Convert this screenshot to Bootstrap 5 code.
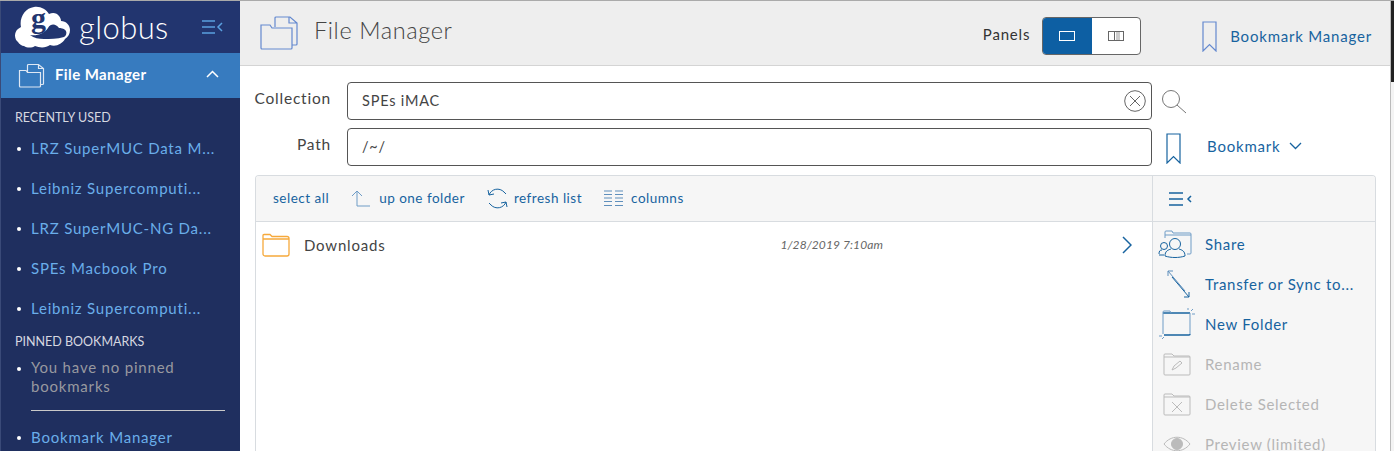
<!DOCTYPE html>
<html lang="en">

<head>
  <meta charset="UTF-8" />
  <title>File Manager</title>
  <link href="https://cdn.jsdelivr.net/npm/bootstrap@5.3.2/dist/css/bootstrap.min.css" rel="stylesheet" />
  <style>
    html, body { height: 451px; overflow: hidden; }
    body { font-family: Lato, "Liberation Sans", sans-serif; font-size: 15px; color: #333; letter-spacing: .8px; border-top: 1px solid #aaa; }
    .app-shell { height: 450px; }

    /* sidebar */
    .side-nav { width: 240px; flex: none; background: #1f2f5f; color: #ddd; border-left: 1px solid #3a4a78; overflow: hidden; }
    .side-brand { height: 52px; background: #22356f; padding: 0 16px 0 14px; }
    .side-brand-name { font-size: 31px; font-weight: 300; color: #fff; letter-spacing: .4px; margin-left: 8px; line-height: 1; }
    .side-active { height: 45px; background: #377bbf; color: #fff; padding: 0 21px 0 17px; font-size: 15px; font-weight: 700; letter-spacing: .4px; }
    .side-active-name { margin-left: 10px; margin-bottom: 3px; }
    .side-chevron { margin-left: auto; margin-bottom: 3px; }
    .side-head { font-size: 12.5px; color: #d6d8e0; padding-left: 14px; letter-spacing: 0; line-height: 16px; }
    .side-list { list-style: none; margin: 0; padding: 0 0 0 14px; font-size: 15px; }
    .side-list li { position: relative; padding-left: 16px; line-height: 20px; margin-bottom: 20px; white-space: nowrap; }
    .side-list li:last-child { margin-bottom: 16px; }
    .side-list li::before { content: ""; position: absolute; left: 2px; top: 9px; width: 4px; height: 4px; border-radius: 50%; background: #fff; }
    .side-list a { color: #6aaeea; text-decoration: none; }
    .side-list li.side-note { margin-bottom: 0; white-space: normal; }
    .side-muted { color: #98999f; line-height: 19px; }
    .side-rule { height: 1px; width: 194px; background: #c9c9c9; margin: 14px 0 16px 30px; }

    /* header */
    .top-bar { height: 65px; background: #eee; border-bottom: 1px solid #d4d4d4; padding: 0 18px 0 20px; }
    .top-title { font-size: 23.5px; font-weight: 300; color: #444; margin-left: 16px; margin-bottom: 5px; letter-spacing: .6px; }
    .top-right { margin-left: auto; margin-top: 6px; }
    .panel-label { margin-top: -3px; }
    .panel-btns { width: 99px; height: 38px; margin-left: 12px; margin-right: 61px; border: 1px solid #666; border-radius: 4px; overflow: hidden; background: #fff; }
    .panel-on { width: 50px; background: #0d5fa3; margin: -1px 0 -1px -1px; }
    .panel-off { flex: 1; }
    .link-blue { color: #17639f; text-decoration: none; }
    .top-link { margin-left: 13px; }

    /* form */
    .path-form { padding: 16px 0 0 0; height: 109px; }
    .form-row-line { height: 46px; }
    .field-label { width: 91px; margin-right: 16px; padding-top: 5px; text-align: right; color: #444; font-size: 15.5px; flex: none; }
    .field-box { width: 805px; height: 38px; flex: none; border: 1px solid #555; border-radius: 4px; padding: 0 5px 0 14px; color: #444; font-size: 14.5px; }
    .search-icon { margin: 7px 0 0 9px; }
    .mark-icon { margin: 5px 0 0 14px; }
    .mark-link { margin: 7px 0 0 26px; }

    /* file panel */
    .file-panel { width: 1121px; margin-left: 15px; border: 1px solid #d8dce0; border-bottom: 0; border-radius: 4px 4px 0 0; height: 278px; overflow: hidden; }
    .file-main { width: 896px; flex: none; }
    .file-tools { height: 46px; background: #f6f6f6; border-bottom: 1px solid #d8dce0; padding-left: 17px; font-size: 13.5px; letter-spacing: .5px; gap: 22px; }
    .tool-gap { margin-right: 8px; }
    .tool-gap-sm { margin-right: 6px; }
    .file-row { height: 48px; padding: 0 20px 2px 6px; color: #444; font-size: 15px; }
    .file-name { margin-left: 14px; }
    .file-date { font-style: italic; font-size: 12px; color: #666; margin-left: auto; margin-right: 239px; letter-spacing: .1px; }
    .action-col { flex: 1; background: #f6f6f6; border-left: 1px solid #d8dce0; }
    .action-top { height: 46px; border-bottom: 1px solid #d8dce0; padding-left: 16px; margin-bottom: 2px; }
    .action-row { height: 40px; padding-left: 5px; font-size: 15px; letter-spacing: .7px; white-space: nowrap; }
    .action-icon { width: 39px; flex: none; margin-right: 8px; }
    .action-off { color: #b5b5b5; }
    .icon-in-8 { margin-left: 8px; }
    .icon-in-5 { margin-left: 5px; }

    /* window scrollbar */
    .win-scroll { width: 4px; flex: none; background: #f4f4f4; border-left: 1px solid #bbb; }
    .win-thumb { height: 81px; background: #222; }
    svg { display: block; flex: none; }
  </style>
</head>

<body>
  <div class="app-shell d-flex">
    <!-- Sidebar -->
    <nav class="side-nav">
      <div class="side-brand d-flex align-items-center">
        <svg width="56" height="42" viewBox="0 0 56 42">
          <path fill="#fff" d="M3 36c-4-3-4-10 0-13 1-1 2-1 3-2C4 12 10 2 19 1c6-1 12 2 15 7 4-2 8-1 10 2 1 1 2 3 2 5 5 0 9 4 9 9 0 4-2 7-5 9-3 5-9 8-15 6-4 3-10 3-15 1-3 2-8 2-11 0-2 0-5-2-6-4z" />
          <path fill="#22356f" d="M15 29c7 1 14-1 18-7 3-5 8-4 11 0 1 0 5 0 7 3 1 2 0 5-2 6-7 2-14 2-20 2-5 0-10-1-14-4z" />
          <text x="16" y="22" fill="#22356f" font-family="Liberation Serif, serif" font-size="30" font-weight="700" letter-spacing="0">g</text>
        </svg>
        <span class="side-brand-name">globus</span>
        <svg class="ms-auto" width="22" height="16" viewBox="0 0 22 16" fill="none" stroke="#5aa0e0" stroke-width="1.5">
          <path d="M0 2h13M0 8h13M0 14h13M20 4l-4 4 4 4" />
        </svg>
      </div>
      <div class="side-active d-flex align-items-center">
        <svg width="27" height="25" viewBox="0 0 27 25" fill="none" stroke="#dfe8f4" stroke-width="1.2">
          <path d="M1.500 7.500h6.500l1.500 2h13v13.500a1 1 0 0 1-1 1h-19a1 1 0 0 1-1-1zM9.500 9V2.500a1 1 0 0 1 1-1h10l5 4v15a1 1 0 0 1-1 1h-1.500M20.500 1.500v4h5" />
        </svg>
        <span class="side-active-name">File Manager</span>
        <svg class="side-chevron" width="13" height="8" viewBox="0 0 13 8" fill="none" stroke="#fff" stroke-width="1.500">
          <path d="M1 7l5.500-5.500L12 7" />
        </svg>
      </div>
      <div class="side-head mt-2 mb-2 pb-1 pt-1">RECENTLY USED</div>
      <ul class="side-list">
        <li><a href="#">LRZ SuperMUC Data M...</a></li>
        <li><a href="#">Leibniz Supercomputi...</a></li>
        <li><a href="#">LRZ SuperMUC-NG Da...</a></li>
        <li><a href="#">SPEs Macbook Pro</a></li>
        <li><a href="#">Leibniz Supercomputi...</a></li>
      </ul>
      <div class="side-head mb-2">PINNED BOOKMARKS</div>
      <ul class="side-list">
        <li class="side-note d-flex align-items-center"><span class="side-muted">You have no pinned bookmarks</span></li>
      </ul>
      <div class="side-rule"></div>
      <ul class="side-list">
        <li><a href="#">Bookmark Manager</a></li>
      </ul>
    </nav>

    <main class="flex-grow-1">
      <!-- Header -->
      <header class="top-bar d-flex align-items-center">
        <svg width="38" height="35" viewBox="0 0 38 35" fill="none" stroke="#6489cf" stroke-width="1.200">
          <path d="M1 9h9l2 3h20v20a1 1 0 0 1-1 1H2a1 1 0 0 1-1-1zM15 11V2a1 1 0 0 1 1-1h14l7 6v21a1 1 0 0 1-1 1h-4M29 1v6h8" />
        </svg>
        <span class="top-title">File Manager</span>
        <div class="top-right d-flex align-items-center">
          <span class="panel-label">Panels</span>
          <div class="panel-btns d-flex">
            <div class="panel-on d-flex align-items-center justify-content-center">
              <svg width="16" height="10" viewBox="0 0 16 10" fill="none" stroke="#fff"><rect x=".5" y=".5" width="15" height="9" /></svg>
            </div>
            <div class="panel-off d-flex align-items-center justify-content-center">
              <svg width="16" height="10" viewBox="0 0 16 10" fill="none" stroke="#666"><rect x="8" y="1" width="4" height="8" fill="#ccc" stroke="none" /><rect x=".5" y=".5" width="15" height="9" /><path d="M6.500 0v10" /></svg>
            </div>
          </div>
          <svg width="15" height="31" viewBox="0 0 15 31" fill="none" stroke="#6489cf" stroke-width="1.200">
            <path d="M1 1h13v29l-6.500-6.500L1 30z" />
          </svg>
          <a class="link-blue top-link" href="#">Bookmark Manager</a>
        </div>
      </header>

      <!-- Collection and path -->
      <div class="path-form">
        <div class="form-row-line d-flex align-items-start">
          <div class="field-label">Collection</div>
          <div class="field-box d-flex align-items-center">
            <span>SPEs iMAC</span>
            <svg class="ms-auto" width="22" height="22" viewBox="0 0 22 22" fill="none" stroke="#666">
              <circle cx="11" cy="11" r="10.300" /><path d="M6 6l10 10M16 6L6 16" />
            </svg>
          </div>
          <svg class="search-icon" width="26" height="26" viewBox="0 0 26 26" fill="none" stroke="#777">
            <circle cx="10" cy="10" r="8.500" /><path d="M16 16l9 8" />
          </svg>
        </div>
        <div class="form-row-line d-flex align-items-start">
          <div class="field-label">Path</div>
          <div class="field-box d-flex align-items-center"><span>/~/</span></div>
          <svg class="mark-icon" width="15" height="31" viewBox="0 0 15 31" fill="none" stroke="#17639f" stroke-width="1.200">
            <path d="M1 1h13v29l-6.500-6.500L1 30z" />
          </svg>
          <a class="link-blue mark-link d-flex align-items-center" href="#">Bookmark
            <svg class="ms-2" width="13" height="8" viewBox="0 0 13 8" fill="none" stroke="#17639f" stroke-width="1.300"><path d="M1 1l5.500 5.500L12 1" /></svg>
          </a>
        </div>
      </div>

      <!-- File list -->
      <div class="file-panel d-flex">
        <div class="file-main">
          <div class="file-tools d-flex align-items-center">
            <a class="link-blue" href="#">select all</a>
            <a class="link-blue d-flex align-items-center" href="#">
              <svg class="tool-gap" width="20" height="18" viewBox="0 0 20 18" fill="none" stroke="#6f9cc6"><path d="M1 6l5-5 5 5M6 1v15h13" /></svg>
              up one folder</a>
            <a class="link-blue d-flex align-items-center" href="#">
              <svg class="tool-gap-sm" width="21" height="21" viewBox="0 0 21 21" fill="none" stroke="#17639f"><path d="M2 7a9 9 0 0 1 15-3l2 2M19 14a9 9 0 0 1-15 3l-2-2M1 2l1 5 5-1M20 19l-1-5-5 1" /></svg>
              refresh list</a>
            <a class="link-blue d-flex align-items-center" href="#">
              <svg class="tool-gap" width="19" height="17" viewBox="0 0 19 17" fill="none" stroke="#5f8fbc"><path d="M0 1h8M0 4.500h8M0 8h8M0 11.500h8M0 15.500h8M11 1h8M11 4.500h8M11 8h8M11 11.500h8M11 15.500h8" /></svg>
              columns</a>
          </div>
          <div class="file-row d-flex align-items-center">
            <svg width="28" height="24" viewBox="0 0 28 24" fill="none" stroke="#f6a93b" stroke-width="1.300">
              <path d="M1 2.500a1 1 0 0 1 1-1h6l2 2h15a2 2 0 0 1 2 2V21a2 2 0 0 1-2 2H3a2 2 0 0 1-2-2zM1 6h26" />
            </svg>
            <span class="file-name">Downloads</span>
            <span class="file-date">1/28/2019 7:10am</span>
            <svg width="10" height="18" viewBox="0 0 10 18" fill="none" stroke="#17639f" stroke-width="1.500"><path d="M1 1l8 8-8 8" /></svg>
          </div>
        </div>

        <div class="action-col">
          <div class="action-top d-flex align-items-center">
            <svg width="23" height="14" viewBox="0 0 23 14" fill="none" stroke="#17639f" stroke-width="1.500"><path d="M0 1h14M0 7h14M0 13h14M22 4l-3 3 3 3" /></svg>
          </div>
          <a class="action-row link-blue d-flex align-items-center" href="#">
            <span class="action-icon">
              <svg width="36" height="29" viewBox="0 0 36 29" fill="none" stroke="#17639f">
                <path d="M7 8V2a1 1 0 0 1 1-1h6l1 2h17a1 1 0 0 1 1 1v19a1 1 0 0 1-1 1h-3M7 5h26" stroke="#6f9cc6" />
                <circle cx="17" cy="14" r="5.500" /><path d="M7 26c0-5 3-6 6-7M27 26c0-5-3-6-6-7M7 26c6 2 14 2 20 0" />
                <circle cx="6" cy="16" r="3.500" /><path d="M1 24c0-3 1-4 3-4M6 25H1" />
              </svg>
            </span>Share</a>
          <a class="action-row link-blue d-flex align-items-center" href="#">
            <span class="action-icon">
              <svg class="icon-in-8" width="26" height="30" viewBox="0 0 26 30" fill="none" stroke="#17639f">
                <path d="M2 2l17 20M2 2v5M2 2h5" stroke="#5f8fbc" /><path d="M6 8l17 20M23 28v-5M23 28h-5" />
              </svg>
            </span>Transfer or Sync to...</a>
          <a class="action-row link-blue d-flex align-items-center" href="#">
            <span class="action-icon">
              <svg width="37" height="32" viewBox="0 0 37 32" fill="none" stroke="#17639f">
                <path d="M5 5h27" stroke-width="1.500" /><path d="M6 27h25a1 1 0 0 0 1-1" stroke-width="1.500" />
                <path d="M5 26V4a1 1 0 0 1 1-1h6l1 2M32 5v21" stroke="#6f9cc6" />
                <path d="M33 3l2-2M34 6h3M30 2V0M1 28h3M4 31l2-2" stroke="#6f9cc6" />
              </svg>
            </span>New Folder</a>
          <div class="action-row action-off d-flex align-items-center">
            <span class="action-icon">
              <svg class="icon-in-5" width="28" height="25" viewBox="0 0 28 25" fill="none" stroke="#bbb">
                <path d="M1 3a1 1 0 0 1 1-1h7l2 2h15a1 1 0 0 1 1 1v17a1 1 0 0 1-1 1H2a1 1 0 0 1-1-1zM1 5h26M9 18l2-4 6-5 2 2-6 5-4 2" />
              </svg>
            </span>Rename</div>
          <div class="action-row action-off d-flex align-items-center">
            <span class="action-icon">
              <svg class="icon-in-5" width="28" height="25" viewBox="0 0 28 25" fill="none" stroke="#bbb">
                <path d="M1 3a1 1 0 0 1 1-1h7l2 2h15a1 1 0 0 1 1 1v17a1 1 0 0 1-1 1H2a1 1 0 0 1-1-1zM1 5h26M9 10l10 10M19 10L9 20" />
              </svg>
            </span>Delete Selected</div>
          <div class="action-row action-off d-flex align-items-center">
            <span class="action-icon">
              <svg class="icon-in-5" width="28" height="20" viewBox="0 0 28 20" fill="none" stroke="#bbb">
                <path d="M1 10c7-9 19-9 26 0-7 9-19 9-26 0z" /><circle cx="14" cy="10" r="5.500" fill="#bbb" />
              </svg>
            </span>Preview (limited)</div>
        </div>
      </div>
    </main>
    <div class="win-scroll"><div class="win-thumb"></div></div>
  </div>
  <script src="https://cdn.jsdelivr.net/npm/bootstrap@5.3.2/dist/js/bootstrap.bundle.min.js"></script>
</body>

</html>
